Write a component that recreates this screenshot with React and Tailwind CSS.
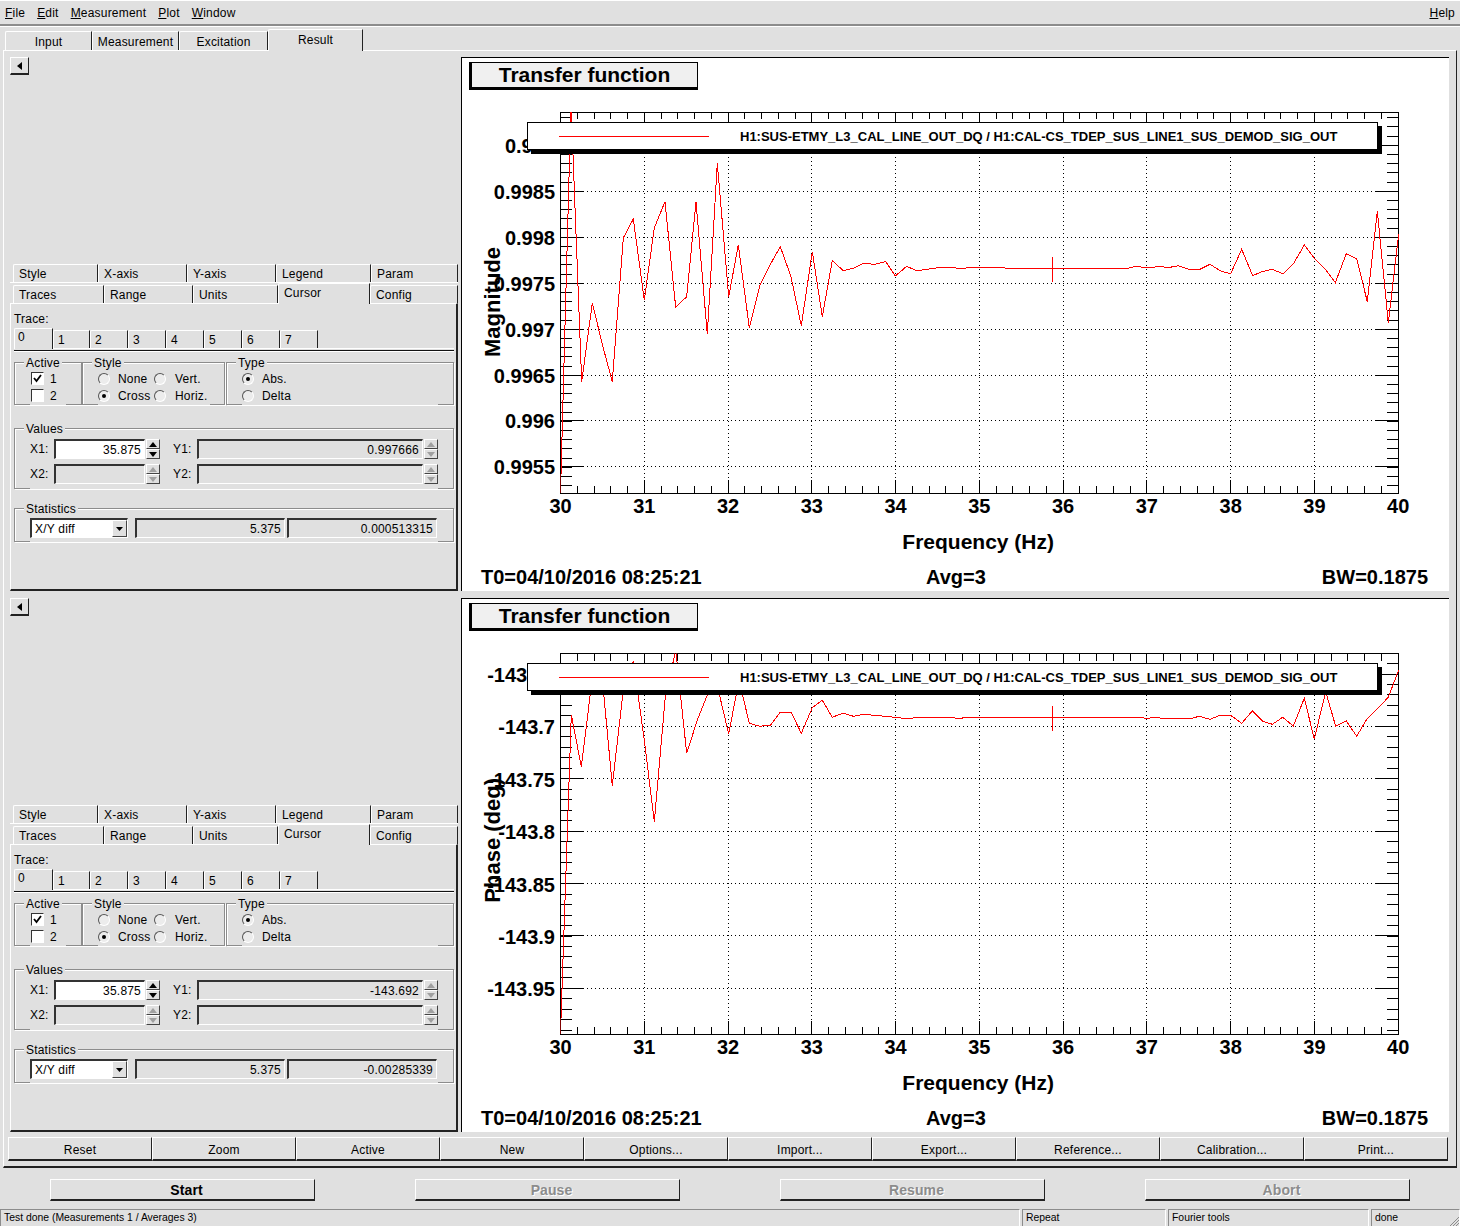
import { Fragment } from 'react';

const MENU = ['File', 'Edit', 'Measurement', 'Plot', 'Window'];

const MAIN_TABS = [
  { label: 'Input', w: 'w-[87px]' },
  { label: 'Measurement', w: 'w-[87px]' },
  { label: 'Excitation', w: 'w-[89px]' },
  { label: 'Result', w: 'w-[95px]', active: true },
];

const ROW1_TABS = [
  { label: 'Style', w: 'w-[85px]' },
  { label: 'X-axis', w: 'w-[89px]' },
  { label: 'Y-axis', w: 'w-[89px]' },
  { label: 'Legend', w: 'w-[95px]' },
  { label: 'Param', w: 'w-[87px]' },
];

const ROW2_TABS = [
  { label: 'Traces', w: 'w-[91px]' },
  { label: 'Range', w: 'w-[89px]' },
  { label: 'Units', w: 'w-[85px]' },
  { label: 'Cursor', w: 'w-[92px]', active: true },
  { label: 'Config', w: 'w-[88px]' },
];

const TRACE_TABS = [
  { label: '0', w: 'w-[39px]', active: true },
  { label: '1', w: 'w-[37px]' },
  { label: '2', w: 'w-[38px]' },
  { label: '3', w: 'w-[38px]' },
  { label: '4', w: 'w-[38px]' },
  { label: '5', w: 'w-[38px]' },
  { label: '6', w: 'w-[38px]' },
  { label: '7', w: 'w-[38px]' },
];

const ACTIONS = ['Reset', 'Zoom', 'Active', 'New', 'Options...', 'Import...', 'Export...', 'Reference...', 'Calibration...', 'Print...'];

const LEGEND_TEXT = 'H1:SUS-ETMY_L3_CAL_LINE_OUT_DQ / H1:CAL-CS_TDEP_SUS_LINE1_SUS_DEMOD_SIG_OUT';

// page coordinates read off the screenshot
const MAG_TRACE = '560.5,493 571,103 581.7,381.7 592.3,303 602.5,345 612.3,381.7 623.3,238 633.3,219 644.3,300 654.3,228 665,201.7 675.7,307.3 686.7,296.7 696,201.7 707.3,334.3 717.3,163.3 728.7,296.7 738.3,245 749.3,327.7 760,285 770,265 780.3,246.7 791,276.7 801.3,325.7 812.3,251.7 822.3,316.7 832.3,260.7 843.3,270.7 853.3,268.3 863.3,263.3 874.3,264.3 885.7,261.7 895.3,276 906.7,266.3 916.7,270.7 926.7,269.3 943.3,267 960,268.3 980,267.3 990,268 1000,267 1006.7,268.3 1128.3,268.3 1136,266.3 1147.7,268 1156.7,266.7 1170,267.3 1178.3,265.7 1189.3,269.3 1200,269.3 1210,264.3 1220.7,271 1230.7,273.7 1241.7,249.3 1252.7,275.7 1261.7,271.7 1272,269.3 1283,273.7 1293.3,264 1304.3,245 1314.3,258.3 1326,270 1335.3,282.7 1346.3,253.7 1356.7,259 1367.3,301.7 1377.3,211 1388.3,322.7 1398.7,234';

const PHASE_TRACE = '560.5,1034 571.3,714.7 581.3,766.7 592.3,678 602.6,682 612.3,785.7 623.3,690 633.3,661 644.3,740 654.3,821.7 665,700 675.7,650 686.7,753.3 697.3,720 707.3,695 718.3,690 728.7,734 739,680 749.3,723.3 760,726.3 770.7,725 780.3,712 791,712 801.3,733.3 812.3,707.7 822.3,700.3 832.3,717.3 843.3,713 853.3,716.3 864.3,714.3 874.3,715.3 885,716.3 895.3,717.3 906,718.7 916.7,717.7 952.7,717.7 960,718.7 965,717.3 1141.7,717.3 1146.7,718.7 1153,717.3 1163,718.3 1191.7,718.3 1199,716.3 1210,719.3 1220,715.3 1230.7,715.3 1241.7,723.3 1252.3,711 1262.3,721 1272.3,724.3 1282.7,717.3 1293.3,726 1304.3,698.3 1314.3,739 1325.7,691.7 1335.7,726.3 1346.3,721 1356.7,736.3 1366.7,719.3 1377.7,708.3 1388.3,697.3 1398.7,670';

const X0 = 560.5;
const X1 = 1398.2;
const XSTEP = (X1 - X0) / 10;

function Tab({ tab, base, idle, current }) {
  return (
    <div className={`${tab.w} ${base} ${tab.active ? current : idle}`}>{tab.label}</div>
  );
}

function MainTabs() {
  return (
    <div className="flex items-end h-[23px] pl-[5px]">
      {MAIN_TABS.map((t) => (
        <Tab
          key={t.label}
          tab={t}
          base="text-center border-l border-t border-white border-r border-r-[#222] rounded-tl-[2px]"
          idle="h-[19px] leading-[20px]"
          current="h-[22px] leading-[20px] -mb-px bg-[#e0e0e0] relative z-10"
        />
      ))}
    </div>
  );
}

function Radio({ on }) {
  return (
    <span className="w-[12px] h-[12px] shrink-0 rounded-full border border-t-[#555] border-l-[#555] border-r-white border-b-white bg-[#ececec] flex items-center justify-center">
      {on && <span className="w-[4px] h-[4px] rounded-full bg-black" />}
    </span>
  );
}

function Check({ on }) {
  return (
    <span className="w-[13px] h-[13px] shrink-0 border border-t-[#333] border-l-[#333] border-r-white border-b-white bg-white flex items-center justify-center">
      {on && (
        <svg width="9" height="9" viewBox="0 0 9 9">
          <path d="M1 4 L3.5 7 L8 1" fill="none" stroke="#000" strokeWidth="1.8" />
        </svg>
      )}
    </span>
  );
}

function Group({ title, className, children }) {
  return (
    <fieldset className={`border border-[#8c8c8c] shadow-[inset_1px_1px_0_#fff,1px_1px_0_#fff] min-w-0 ${className}`}>
      <legend className="ml-[9px] px-[2px] h-[14px] leading-[16px] bg-[#e0e0e0]">{title}</legend>
      {children}
    </fieldset>
  );
}

function SpinArrow({ up, off }) {
  return (
    <span className="w-[14px] h-[10px] border-t border-l border-white border-r border-b border-r-[#444] border-b-[#444] flex items-center justify-center">
      <svg width="8" height="5" viewBox="0 0 8 5">
        <path d={up ? 'M4 0 L8 5 L0 5 Z' : 'M0 0 L8 0 L4 5 Z'} fill={off ? '#a0a0a0' : '#000'} />
      </svg>
    </span>
  );
}

function Spin({ off }) {
  return (
    <div className="ml-px flex flex-col w-[14px]">
      <SpinArrow up off={off} />
      <SpinArrow off={off} />
    </div>
  );
}

function Field({ w, value, white, h = 'h-[20px]' }) {
  return (
    <div className={`${w} ${h} border-t-2 border-l-2 border-t-[#333] border-l-[#333] border-r border-b border-r-white border-b-white text-right pr-[3px] leading-[18px] ${white ? 'bg-white' : ''}`}>
      {value}
    </div>
  );
}

function ValueRow({ a, b, va, vb, white, className }) {
  return (
    <div className={`flex items-center h-[20px] ${className}`}>
      <span className="w-[24px]">{a}</span>
      <Field w="w-[91px]" value={va} white={white} />
      <Spin off={!white} />
      <span className="ml-[13px] w-[24px]">{b}</span>
      <Field w="w-[226px]" value={vb} />
      <Spin off />
    </div>
  );
}

function CursorPane({ y1, diffY }) {
  return (
    <div className="flex flex-col h-[534px] pl-[6px]">
      <button className="w-[19px] h-[18px] border-t border-l border-white border-r border-b-2 border-r-[#222] border-b-[#222] flex items-center justify-center">
        <svg width="5" height="8" viewBox="0 0 5 8">
          <path d="M0 4 L5 0 L5 8 Z" fill="#000" />
        </svg>
      </button>

      <div className="mt-auto w-[448px]">
        <div className="flex h-[19px] pl-[3px] border-b border-white">
          {ROW1_TABS.map((t) => (
            <Tab
              key={t.label}
              tab={t}
              base="pl-[5px] h-[18px] leading-[18px] border-l border-t border-white border-r border-r-[#222] rounded-tl-[2px]"
            />
          ))}
        </div>
        <div className="flex items-end h-[20px] pl-[3px]">
          {ROW2_TABS.map((t) => (
            <Tab
              key={t.label}
              tab={t}
              base="pl-[5px] border-l border-t border-white border-r border-r-[#222] rounded-tl-[2px]"
              idle="h-[18px] leading-[18px]"
              current="h-[21px] leading-[18px] -mb-px bg-[#e0e0e0] relative z-10"
            />
          ))}
        </div>

        <div className="h-[288px] pl-[3px] pt-[7px] border-t border-l border-white border-r-2 border-b-2 border-r-[#222] border-b-[#222]">
          <div className="h-[16px] leading-[16px]">Trace:</div>
          <div className="mt-px flex items-end h-[21px] w-[440px] border-b border-white">
            {TRACE_TABS.map((t) => (
              <Tab
                key={t.label}
                tab={t}
                base="border-l border-t border-white border-r border-r-[#222] rounded-tl-[2px]"
                idle="h-[18px] leading-[18px] pl-[4px]"
                current="h-[21px] leading-[17px] pl-[3px] -mb-px bg-[#e0e0e0] relative z-10"
              />
            ))}
          </div>
          <div className="mt-px w-[440px] h-[2px] border-t border-b border-t-[#111] border-b-white" />

          <div className="mt-[3px] flex w-[440px]">
            <Group title="Active" className="w-[68px] h-[50px]">
              <div className="ml-[15px] mt-px w-[36px] h-[35px] bg-[#e0e0e0]">
                <div className="flex items-center h-[17px] pl-px">
                  <Check on />
                  <span className="ml-[6px]">1</span>
                </div>
                <div className="flex items-center h-[17px] pl-px">
                  <Check />
                  <span className="ml-[6px]">2</span>
                </div>
              </div>
            </Group>
            <Group title="Style" className="w-[143px] h-[50px]">
              <div className="ml-[15px] mt-px w-[112px] h-[35px] bg-[#e0e0e0]">
                <div className="flex items-center h-[17px]">
                  <Radio />
                  <span className="ml-[8px] w-[36px]">None</span>
                  <Radio />
                  <span className="ml-[9px]">Vert.</span>
                </div>
                <div className="flex items-center h-[17px]">
                  <Radio on />
                  <span className="ml-[8px] w-[36px]">Cross</span>
                  <Radio />
                  <span className="ml-[9px]">Horiz.</span>
                </div>
              </div>
            </Group>
            <Group title="Type" className="ml-px w-[228px] h-[50px]">
              <div className="ml-[15px] mt-px w-[196px] h-[35px] bg-[#e0e0e0]">
                <div className="flex items-center h-[17px]">
                  <Radio on />
                  <span className="ml-[8px]">Abs.</span>
                </div>
                <div className="flex items-center h-[17px]">
                  <Radio />
                  <span className="ml-[8px]">Delta</span>
                </div>
              </div>
            </Group>
          </div>

          <Group title="Values" className="mt-[16px] w-[440px] h-[68px]">
            <div className="ml-[15px] w-[408px] h-[54px] pt-[4px] bg-[#e0e0e0]">
              <ValueRow a="X1:" b="Y1:" va="35.875" vb={y1} white />
              <ValueRow a="X2:" b="Y2:" className="mt-[5px]" />
            </div>
          </Group>

          <Group title="Statistics" className="mt-[12px] w-[440px] h-[41px]">
            <div className="ml-[15px] w-[408px] h-[27px] pt-[3px] flex bg-[#e0e0e0]">
              <div className="w-[98px] h-[20px] flex border-t-2 border-l-2 border-t-[#333] border-l-[#333] border-r border-b border-r-white border-b-white bg-white">
                <span className="flex-1 pl-[3px] leading-[18px]">X/Y diff</span>
                <span className="w-[15px] h-full bg-[#e0e0e0] border-t border-l border-white border-r border-b border-r-[#444] border-b-[#444] flex items-center justify-center">
                  <svg width="7" height="4" viewBox="0 0 7 4">
                    <path d="M0 0 L7 0 L3.5 4 Z" fill="#000" />
                  </svg>
                </span>
              </div>
              <Field w="ml-[7px] w-[150px]" value="5.375" />
              <Field w="ml-[2px] w-[150px]" value={diffY} />
            </div>
          </Group>
        </div>
      </div>
    </div>
  );
}

function Ticks({ top, bottom, yMajor, yStep, yFirst }) {
  const xMajor = Array.from({ length: 11 }, (_, i) => X0 + i * XSTEP);
  const xMinor = Array.from({ length: 51 }, (_, i) => X0 + (i * XSTEP) / 5);
  const yMinor = [];
  for (let y = yFirst; y > top; y -= yStep) yMinor.unshift(y);
  for (let y = yFirst + yStep; y < bottom; y += yStep) yMinor.push(y);
  return (
    <g stroke="#000" strokeWidth="1" shapeRendering="crispEdges">
      <rect x={X0} y={top} width={X1 - X0} height={bottom - top} fill="none" />
      {xMinor.map((x) => (
        <Fragment key={x}>
          <line x1={x} x2={x} y1={bottom} y2={bottom - 7} />
          <line x1={x} x2={x} y1={top} y2={top + 7} />
        </Fragment>
      ))}
      {xMajor.map((x) => (
        <Fragment key={x}>
          <line x1={x} x2={x} y1={bottom} y2={bottom - 13} />
          <line x1={x} x2={x} y1={top} y2={top + 13} />
        </Fragment>
      ))}
      {yMinor.map((y) => (
        <Fragment key={y}>
          <line x1={X0} x2={X0 + 11} y1={y} y2={y} />
          <line x1={X1} x2={X1 - 11} y1={y} y2={y} />
        </Fragment>
      ))}
      {yMajor.map((m) => (
        <Fragment key={m.label}>
          <line x1={X0} x2={X0 + 22} y1={m.y} y2={m.y} />
          <line x1={X1} x2={X1 - 22} y1={m.y} y2={m.y} />
        </Fragment>
      ))}
      <g strokeDasharray="1 3">
        {xMajor.slice(1, 10).map((x) => (
          <line key={x} x1={x} x2={x} y1={top + 1} y2={bottom - 13} />
        ))}
        {yMajor.map((m) => (
          <line key={m.label} x1={X0 + 22} x2={X1 - 22} y1={m.y} y2={m.y} />
        ))}
      </g>
    </g>
  );
}

function Plot({ id, y0, top, bottom, yMajor, yStep, yTitle, yTitleAt, trace, cursorY }) {
  const off = y0 - 58;
  return (
    <div className="relative w-[988px] h-[534px] bg-white border-t border-l border-t-black border-l-black tracking-normal">
      <svg width="987" height="533" viewBox={`462 ${y0} 987 533`} className="block" fontWeight="700" fontFamily="'Liberation Sans', sans-serif">
        <defs>
          <clipPath id={id}>
            <rect x={X0} y={top} width={X1 - X0 + 1} height={bottom - top} />
          </clipPath>
        </defs>
        <Ticks top={top} bottom={bottom} yMajor={yMajor} yStep={yStep} yFirst={yMajor[0].y} />
        <polyline points={trace} fill="none" stroke="#f00" strokeWidth="1" shapeRendering="crispEdges" clipPath={`url(#${id})`} />
        <line x1="1052.5" x2="1052.5" y1={cursorY - 12} y2={cursorY + 13} stroke="#f00" shapeRendering="crispEdges" />
        {yMajor.map((m) => (
          <text key={m.label} x="555" y={m.y + 8} textAnchor="end" fontSize="20">{m.label}</text>
        ))}
        {Array.from({ length: 11 }, (_, i) => (
          <text key={i} x={X0 + i * XSTEP} y={bottom + 20} textAnchor="middle" fontSize="20">{30 + i}</text>
        ))}
        <text x="1054" y={549 + off} textAnchor="end" fontSize="21">Frequency (Hz)</text>
        <text transform={`translate(500 ${yTitleAt}) rotate(-90)`} textAnchor="end" fontSize="22">{yTitle}</text>
        <text x="481" y={584 + off} fontSize="20">T0=04/10/2016 08:25:21</text>
        <text x="926" y={584 + off} fontSize="20">Avg=3</text>
        <text x="1428" y={584 + off} textAnchor="end" fontSize="20">BW=0.1875</text>
      </svg>

      <div className="absolute left-[7px] top-[4px] w-[229px] h-[28px] bg-[#f0f0f0] border border-black border-l-[3px] border-b-[3px] text-center text-[21px] leading-[24px] font-bold">
        Transfer function
      </div>
      <div className="absolute left-[65px] top-[64px] w-[851px] h-[28px] bg-white border border-black shadow-[4px_4px_0_#000] flex items-center pl-[31px] font-bold text-[13px]">
        <span className="w-[150px] h-px bg-[#f00]" />
        <span className="ml-[31px] mt-[2px] whitespace-nowrap">{LEGEND_TEXT}</span>
      </div>
    </div>
  );
}

const MAG_TICKS = [
  { label: '0.999', y: 145.3 },
  { label: '0.9985', y: 191.3 },
  { label: '0.998', y: 237.3 },
  { label: '0.9975', y: 283.3 },
  { label: '0.997', y: 329.3 },
  { label: '0.9965', y: 375.3 },
  { label: '0.996', y: 420.3 },
  { label: '0.9955', y: 466.3 },
];

const PHASE_TICKS = [
  { label: '-143.65', y: 674 },
  { label: '-143.7', y: 726.3 },
  { label: '-143.75', y: 778.5 },
  { label: '-143.8', y: 831.3 },
  { label: '-143.85', y: 883.7 },
  { label: '-143.9', y: 935.5 },
  { label: '-143.95', y: 988.3 },
];

function Raised({ className, children }) {
  return (
    <button className={`border-t border-l border-white border-r border-b-2 border-r-[#222] border-b-[#222] ${className}`}>
      {children}
    </button>
  );
}

function StatusCell({ w, children }) {
  return (
    <div className={`${w} h-[17px] pl-[3px] border-t border-l border-t-[#8c8c8c] border-l-[#8c8c8c] border-r border-r-white text-[10.4px] leading-[15px] tracking-normal flex whitespace-nowrap`}>
      {children}
    </div>
  );
}

export default function App() {
  return (
    <div className="w-[1460px] h-[1226px] overflow-hidden bg-[#e0e0e0] text-black text-[12px] tracking-[0.2px] font-[family-name:Liberation_Sans]">
      <div className="h-[24px] border-t border-white flex items-center justify-between pl-[5px] pr-[5px]">
        <div className="flex gap-[12px]">
          {MENU.map((m) => (
            <span key={m}><span className="underline">{m[0]}</span>{m.slice(1)}</span>
          ))}
        </div>
        <span><span className="underline">H</span>elp</span>
      </div>
      <div className="h-[3px] border-t-2 border-b border-t-[#8c8c8c] border-b-white" />

      <MainTabs />

      <div className="ml-[3px] w-[1454px] pt-[6px] pb-[5px] border-t border-l border-white border-r border-b-2 border-r-[#222] border-b-[#222]">
        <div className="flex">
          <div className="w-[457px]"><CursorPane y1="0.997666" diffY="0.000513315" /></div>
          <Plot id="mag" y0={58} top={112} bottom={493} yMajor={MAG_TICKS} yStep={9.2} yTitle="Magnitude" yTitleAt={247} trace={MAG_TRACE} cursorY={268.5} />
        </div>
        <div className="flex mt-[7px]">
          <div className="w-[457px]"><CursorPane y1="-143.692" diffY="-0.00285339" /></div>
          <Plot id="phase" y0={599} top={653.5} bottom={1034} yMajor={PHASE_TICKS} yStep={10.48} yTitle="Phase (deg)" yTitleAt={778} trace={PHASE_TRACE} cursorY={717.5} />
        </div>
        <div className="mt-[5px] ml-[4px] flex">
          {ACTIONS.map((a) => (
            <Raised key={a} className="w-[144px] h-[24px] pt-[2px]">{a}</Raised>
          ))}
        </div>
      </div>

      <div className="mt-[11px] pl-[50px] flex gap-[100px] text-[14px] font-bold tracking-[0.1px]">
        <Raised className="w-[265px] h-[22px] pb-px pl-[8px]">Start</Raised>
        <Raised className="w-[265px] h-[22px] pb-px pl-[8px] text-[#8c8c8c] [text-shadow:1px_1px_0_#fff]">Pause</Raised>
        <Raised className="w-[265px] h-[22px] pb-px pl-[8px] text-[#8c8c8c] [text-shadow:1px_1px_0_#fff]">Resume</Raised>
        <Raised className="w-[265px] h-[22px] pb-px pl-[8px] text-[#8c8c8c] [text-shadow:1px_1px_0_#fff]">Abort</Raised>
      </div>

      <div className="mt-[8px] flex gap-[2px]">
        <StatusCell w="w-[1020px]">Test done (Measurements 1 / Averages 3)</StatusCell>
        <StatusCell w="w-[144px]">Repeat</StatusCell>
        <StatusCell w="w-[201px]">Fourier tools</StatusCell>
        <StatusCell w="w-[89px]">
          done
          <svg width="10" height="10" viewBox="0 0 10 10" className="ml-auto mt-[6px]">
            <path d="M10 1 L1 10 M10 4 L4 10 M10 7 L7 10" stroke="#8c8c8c" strokeWidth="1" />
          </svg>
        </StatusCell>
      </div>
    </div>
  );
}
